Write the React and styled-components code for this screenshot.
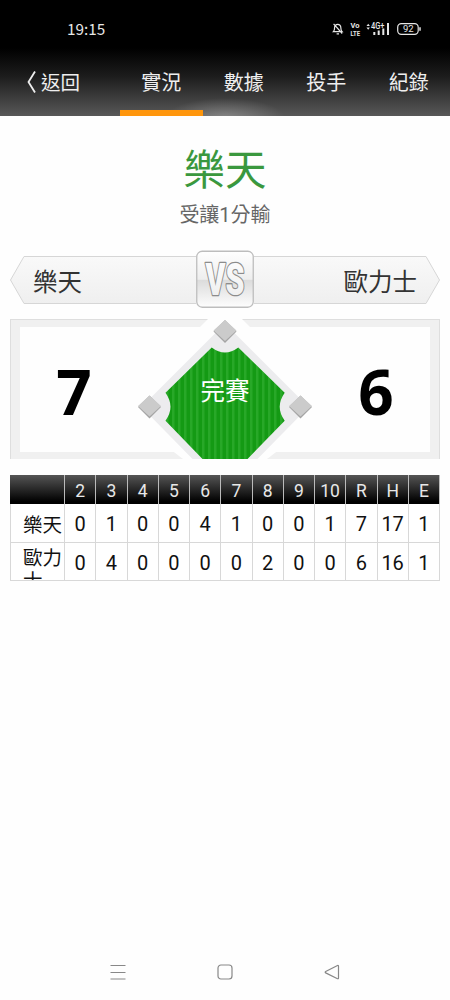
import React from 'react'
import styled, { createGlobalStyle } from 'styled-components'

const GlobalStyle = createGlobalStyle`
    * {
        box-sizing: border-box;
    }
    body {
        margin: 0;
        background: #fff;
        font-family: Roboto, "Noto Sans CJK TC", sans-serif;
    }
`

const Container = styled.div`
    width: 450px;
    height: 1000px;
    display: flex;
    flex-direction: column;
    background: #fefefe;
    overflow: hidden;
`

const Header = styled.header`
    height: 116px;
    background:
        radial-gradient(ellipse 60px 20px at 225px 118px, rgba(255, 255, 255, 0.28), transparent),
        linear-gradient(#000 0, #000 48px, #1c1c1c 76px, #585858 116px);
`

const StatusBar = styled.div`
    height: 48px;
    padding: 10px 28px 0 67px;
    display: flex;
    align-items: center;
    justify-content: space-between;
    color: #e6e6e6;
`

const Time = styled.span`
    padding-bottom: 2px;
    font-family: "Noto Sans CJK TC", sans-serif;
    font-size: 15.3px;
    line-height: 36px;
`

const StatusIcons = styled.svg`
    display: block;
`

const Nav = styled.nav`
    height: 68px;
    display: grid;
    grid-template-columns: 120px repeat(4, 1fr);
`

const Back = styled.div`
    padding: 0 0 1px 26px;
    display: flex;
    align-items: center;
    gap: 4px;
    color: #eee;
    font-size: 19.5px;
`

const Tab = styled.div`
    display: flex;
    align-items: center;
    justify-content: center;
    color: #eee;
    font-size: 20px;
    border-bottom: 6px solid ${props => props.$active ? '#ff960c' : 'transparent'};
    padding-top: 4px;
`

const Headline = styled.section`
    height: 134px;
    padding-top: 29px;
    text-align: center;
`

const Winner = styled.h1`
    margin: 0;
    color: #3a983e;
    font-size: 41.5px;
    font-weight: 400;
    line-height: 52px;
`

const Handicap = styled.p`
    margin: 5px 0 0;
    color: #666;
    font-size: 20px;
    line-height: 26px;
`

const Versus = styled.section`
    height: 58px;
    margin: 0 10px;
    display: grid;
    grid-template-columns: 186px 58px 186px;
    align-items: center;
`

const Team = styled.div`
    height: 48px;
    margin-top: 2px;
    display: grid;
    color: #333;
    font-size: 24.5px;
    line-height: 48px;
    text-align: ${props => props.$away ? 'right' : 'left'};

    > * {
        grid-area: 1 / 1;
    }
`

const TeamName = styled.span`
    padding: 3px 23px 0;
`

const Board = styled.section`
    height: 140px;
    margin: 11px 10px 0;
    display: grid;
    grid-template-columns: 117px 176px 117px;
    border: 1px solid #dedede;
    border-bottom: 0;
    box-shadow: inset 9px 7px #f0f0f0, inset -9px -7px #f0f0f0;
    padding: 0 9px;
`

const Runs = styled.div`
    display: flex;
    align-items: center;
    justify-content: center;
    padding: ${props => props.$away ? '3px 0 0 9px' : '3px 9px 0 0'};
    color: #000;
    font-family: "Open Sans", sans-serif;
    font-size: 62px;
    font-weight: 700;
    line-height: 60px;
`

const Field = styled.div`
    display: grid;
    justify-items: center;

    > * {
        grid-area: 1 / 1;
    }
`

const Diamond = styled.svg`
    display: block;
    margin-top: -1px;
`

const GameState = styled.span`
    z-index: 1;
    padding-top: 56px;
    color: #fff;
    font-size: 24.5px;
    line-height: 32px;
`

const Innings = styled.section`
    margin: 16px 10px 0;
`

const Row = styled.div`
    height: ${props => props.$head ? '29px' : '38px'};
    display: grid;
    grid-template-columns: 55px repeat(12, 1fr);
    background: ${props => props.$head ? 'linear-gradient(#555, #000 92%)' : '#fff'};
    border-bottom: ${props => props.$head ? '0' : '1px solid #d8d8d8'};
    overflow: hidden;

    &:nth-child(2) {
        height: 39px;
    }
`

const Cell = styled.div`
    display: flex;
    align-items: center;
    justify-content: center;
    border-right: 1px solid ${props => props.$head ? '#bbb' : '#d8d8d8'};
    padding-top: 2px;
    color: ${props => props.$head ? '#e8e8e8' : '#111'};
    font-size: ${props => props.$head ? '17.5px' : '20px'};
`

const NameCell = styled.div`
    height: 38px;
    padding: ${props => props.$wrapped ? '4px' : '10px'} 0 0 12px;
    border-left: 1px solid #d8d8d8;
    border-right: 1px solid #d8d8d8;
    color: #111;
    font-size: 19.5px;
    line-height: 23px;
    word-break: break-all;
    overflow: hidden;
`

const SystemBar = styled.footer`
    margin-top: auto;
    height: 56px;
    display: flex;
    align-items: center;
    justify-content: center;
    gap: 91px;
`

const tabs = ['實況', '數據', '投手', '紀錄']

const innings = ['2', '3', '4', '5', '6', '7', '8', '9', '10', 'R', 'H', 'E']

const teams = [
  { name: '樂天', runs: [0, 1, 0, 0, 4, 1, 0, 0, 1, 7, 17, 1] },
  { name: '歐力士', runs: [0, 4, 0, 0, 0, 0, 2, 0, 0, 6, 16, 1] },
]

const StatusSymbols = () => (
  <StatusIcons width="92" height="18" viewBox="0 0 92 18" fill="none" stroke="#e6e6e6">
    <path d="M3.4 11.6c1-1 1.2-2 1.2-4.1A3.1 3.1 0 0 1 7.7 4.3a3.1 3.1 0 0 1 3.1 3.2c0 2.1.3 3.1 1.3 4.1zM6.6 13.8h2.4M3.6 3.8l8.6 9.7" strokeWidth="1.2" />
    <g fill="#e6e6e6" stroke="none" fontFamily="Roboto, sans-serif" fontWeight="700">
      <text x="20.5" y="8" fontSize="7" textLength="9" lengthAdjust="spacingAndGlyphs">Vo</text>
      <text x="20.5" y="15.6" fontSize="7" textLength="9.5" lengthAdjust="spacingAndGlyphs">LTE</text>
      <text x="41" y="8.8" fontSize="8.5" fontWeight="500" textLength="13.5" lengthAdjust="spacingAndGlyphs">4G+</text>
      <path d="M36.5 6l1.7-2.2L39.9 6zM36.5 7.5h3.4L38.2 9.7z" />
      <path d="M43.3 12h2v3h-2zM47.7 10.5h2V15h-2zM52.3 8.5h2V15h-2zM57 3h2v12h-2z" />
      <text x="73" y="12.4" fontSize="9.5" fontWeight="400">92</text>
    </g>
    <rect x="67.7" y="3.6" width="20.5" height="10.8" rx="3.6" strokeWidth="1.2" />
    <path d="M90 7.3v3.4" strokeWidth="1.5" />
  </StatusIcons>
)

const TeamPlate = ({ away }) => (
  <svg width="186" height="48" viewBox="0 0 186 48">
    <defs>
      <linearGradient id="plate" x1="0" y1="0" x2="0" y2="1">
        <stop offset="0" stopColor="#f9f9f9" />
        <stop offset="1" stopColor="#efefef" />
      </linearGradient>
    </defs>
    <path
      d="M190 .5H14L.5 24 14 47.5H190z"
      fill="url(#plate)"
      stroke="#d6d6d6"
      transform={away ? 'matrix(-1 0 0 1 186 0)' : undefined}
    />
  </svg>
)

const VsBadge = () => (
  <svg width="58" height="58" viewBox="0 0 58 58">
    <defs>
      <linearGradient id="badge" x1="0" y1="0" x2="0" y2="1">
        <stop offset="0" stopColor="#fff" />
        <stop offset=".5" stopColor="#eee" />
        <stop offset=".52" stopColor="#dcdcdc" />
        <stop offset="1" stopColor="#fdfdfd" />
      </linearGradient>
      <linearGradient id="letters" x1="0" y1="0" x2="0" y2="1">
        <stop offset="0" stopColor="#fff" />
        <stop offset="1" stopColor="#ececec" />
      </linearGradient>
    </defs>
    <rect x=".75" y="1.25" width="56.5" height="56" rx="5.5" fill="url(#badge)" stroke="#bdbdbd" strokeWidth="1.3" />
    <text
      x="29"
      y="44.5"
      textAnchor="middle"
      textLength="39"
      lengthAdjust="spacingAndGlyphs"
      fontFamily="Roboto, sans-serif"
      fontSize="44"
      fontWeight="900"
      fill="url(#letters)"
      stroke="#8c8c8c"
      strokeWidth="2.6"
      strokeLinejoin="round"
      paintOrder="stroke"
    >
      VS
    </text>
  </svg>
)

const Base = ({ x, y }) => (
  <g transform={`translate(${x} ${y})`}>
    <path d="M0-11.5L11.5 0 0 11.5-11.5 0z" fill="#a4a4a4" />
    <path d="M0-11.5L11.5-1 0 9.5-11.5-1z" fill="#cbcbcb" />
  </g>
)

const Ballpark = () => (
  <Diamond width="176" height="140" viewBox="137 319 176 140">
    <defs>
      <pattern id="grass" x="178" width="6" height="6" patternUnits="userSpaceOnUse">
        <rect width="6" height="6" fill="#149a14" />
        <rect width="2.5" height="6" fill="#28a828" />
      </pattern>
    </defs>
    <path d="M209 318h32l73 73v32l-47 36h-84l-47-36v-32z" fill="#fefefe" />
    <path d="M225 323.5L308.5 407 257.5 459h-65L141.5 407z" fill="#ececee" />
    <path
      d="M211.7 347.5Q225 357.5 238.3 347.5L284.7 392.7Q274.7 407 284.7 420.7L247.5 459h-45L165.5 420.7Q175.5 407 165.5 392.7z"
      fill="url(#grass)"
    />
    <Base x={225} y={331.5} />
    <Base x={149.5} y={407} />
    <Base x={300.5} y={407} />
  </Diamond>
)

const App = () => {
  return (
    <Container>
      <GlobalStyle />
      <Header>
        <StatusBar>
          <Time>19:15</Time>
          <StatusSymbols />
        </StatusBar>
        <Nav>
          <Back>
            <svg width="11" height="24" viewBox="0 0 11 24" fill="none" stroke="#eee" strokeWidth="1.8">
              <path d="M9 1.5L2.5 12 9 22.5" />
            </svg>
            返回
          </Back>
          {tabs.map((tab, i) => (
            <Tab key={tab} $active={i === 0}>{tab}</Tab>
          ))}
        </Nav>
      </Header>
      <Headline>
        <Winner>樂天</Winner>
        <Handicap>受讓1分輸</Handicap>
      </Headline>
      <Versus>
        <Team>
          <TeamPlate />
          <TeamName>樂天</TeamName>
        </Team>
        <VsBadge />
        <Team $away>
          <TeamPlate away />
          <TeamName>歐力士</TeamName>
        </Team>
      </Versus>
      <Board>
        <Runs>7</Runs>
        <Field>
          <Ballpark />
          <GameState>完賽</GameState>
        </Field>
        <Runs $away>6</Runs>
      </Board>
      <Innings>
        <Row $head>
          <Cell $head />
          {innings.map(label => (
            <Cell $head key={label}>{label}</Cell>
          ))}
        </Row>
        {teams.map(team => (
          <Row key={team.name}>
            <NameCell $wrapped={team.name.length > 2}>{team.name}</NameCell>
            {team.runs.map((run, i) => (
              <Cell key={innings[i]}>{run}</Cell>
            ))}
          </Row>
        ))}
      </Innings>
      <SystemBar>
        <svg width="16" height="16" viewBox="0 0 16 16" stroke="#888" strokeWidth="1.2">
          <path d="M.5 1.5h15M.5 8.5h15M.5 15h15" />
        </svg>
        <svg width="16" height="16" viewBox="0 0 16 16" fill="none" stroke="#888" strokeWidth="1.2">
          <rect x="1" y="1" width="14" height="14" rx="3" />
        </svg>
        <svg width="16" height="16" viewBox="0 0 16 16" fill="none" stroke="#888" strokeWidth="1.2">
          <path d="M13.5 1.5L1.7 7.5q-1 .7 0 1.4L13.5 14.7q1 .3 1-.7V2.2q0-1-1-.7z" />
        </svg>
      </SystemBar>
    </Container>
  )
}

export default App
